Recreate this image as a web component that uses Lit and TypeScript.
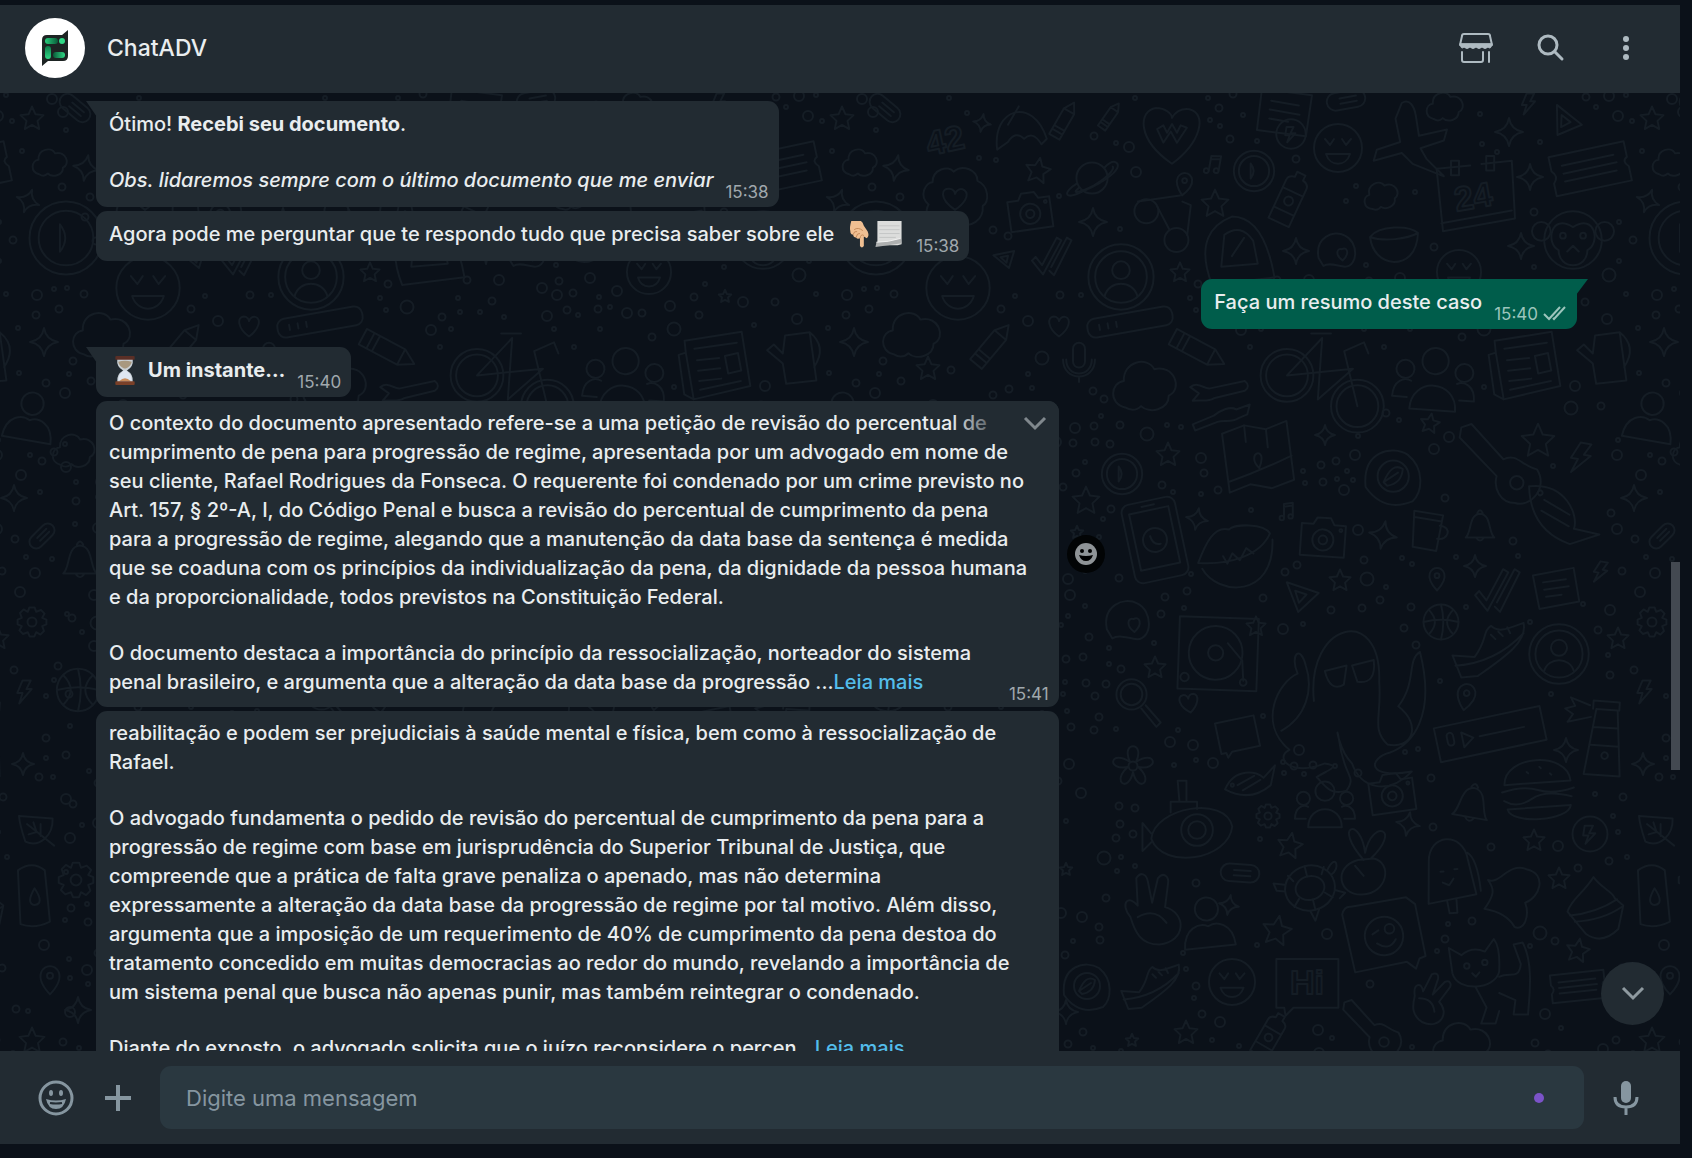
import { LitElement, html, svg, css } from "lit";
import { customElement } from "lit/decorators.js";

/* ---------- wallpaper ---------- */

// Line drawings in a 100 x 100 box centred on the origin.
const shapes: Record<string, unknown> = {
  star: svg`<path d="M0-48 14-16 48-12 23 12 30 46 0 29-30 46-23 12-48-12-14-16Z"/>`,
  sparkle: svg`<path d="M0-50Q7-8 50 0 7 8 0 50-7 8-50 0-7-8 0-50Z"/>`,
  cloud: svg`<path d="M-30 34C-56 28-52-4-32-6-34-36 4-44 14-24 44-32 58 6 36 16 36 38 6 44-6 32-14 40-24 38-30 34Z"/>`,
  heart: svg`<path d="M0 44C-50 8-50-38-22-40-8-40 0-28 0-20 4-30 12-40 26-38 54-30 42 14 0 44Z"/>`,
  bigHeart: svg`<path d="M0 48C-58 8-54-38-26-42-10-42 0-32 0-26 4-34 14-42 28-40 58-32 46 14 0 48Z"/><path d="M-24-8-14 14-2-4 8 14 24-10 14-14 8-2 0-16-8-2-14-14Z"/>`,
  planet: svg`<circle r="30"/><path d="M-28 10C-60 30-52 44-14 24 24 8 62-20 46-30 40-34 28-26 24-20"/><path d="M-24 18C-44 34-20 26 4 14 26 2 44-16 40-22"/>`,
  camera: svg`<path d="M-46-28H-22L-14-42H14L22-28H46V38H-46Z"/><circle r="22" cy="4"/><circle r="9" cy="4"/><circle r="3" cx="36" cy="-18"/>`,
  user: svg`<circle r="48"/><circle r="38"/><circle r="13" cy="-10"/><path d="M-24 28C-18 4 18 4 24 28"/>`,
  bust: svg`<circle r="20" cy="-26"/><path d="M-44 40C-42 2-14-4 0 4 14-4 42 2 44 40Z"/>`,
  group: svg`<circle r="16" cy="-28"/><circle r="11" cx="-36" cy="-16"/><circle r="11" cx="36" cy="-16"/><path d="M-28 32C-28-8 28-8 28 32ZM-32 18H-50C-50-2-36-6-28-2M32 18H50C50-2 36-6 28-2"/>`,
  face: svg`<circle r="48"/><path d="M-26-18-16-6-8-18M8-18 16-6 26-18M-24 12C-16 38 16 38 24 12Z"/>`,
  ticks: svg`<path d="M-48 10-40 2-26 20 6-40 16-34-24 40ZM-6 24 28-40 38-34 0 42-10 32"/>`,
  triangle: svg`<path d="M-40-36 44-8-10 42ZM-18-14 12-4-8 18Z"/>`,
  note: svg`<path d="M-46-34 44-38 46 36-42 40ZM-26-16H24M-26 0H28M-24 16H10"/>`,
  ticket: svg`<path d="M-48-24H48V-4Q40 0 48 8V26H-48V10Q-40 2-48-6ZM-34-10H32M-34 0H34M-34 10H32"/>`,
  bar: svg`<rect x="-50" y="-11" width="100" height="22" rx="9"/><path d="M-36-3V3M-26-3V3M-16-3V3"/>`,
  pencil: svg`<path d="M-46-14H24L48 0 24 14H-46ZM-32-14V14M-22-14V14M24-14V14"/>`,
  mic: svg`<rect x="-15" y="-48" width="30" height="62" rx="15"/><path d="M-32-6C-32 40 32 40 32-6M-40-6C-40 50 40 50 40-6M0 38V50"/>`,
  bolt: svg`<path d="M-6-48H28L10-12H32L-20 48-6 4H-28Z"/>`,
  ring: svg`<circle r="48"/><circle r="36"/><path d="M-8-18Q6 0-8 18Z"/>`,
  coin: svg`<circle r="46"/><path d="M-14-22H8L-2-2H14L-12 26-4 4H-18Z"/>`,
  bottle: svg`<path d="M-20-26Q-20-36-8-38V-48H8V-38Q20-36 20-26V48H-20ZM-20-12H20M-20 26H20"/><circle r="8" cy="6"/>`,
  plane: svg`<path d="M-8-50C2-56 8-46 10-34L14-8 50-16 46-2 16 8 24 22 46 44 6 28-8 14-44 24-40 10-10 0-16-30Z"/>`,
  backpack: svg`<path d="M-34 46C-56-10-34-34-8-44 24-44 40-10 48 36ZM-22 22-18-20Q4-36 20-12L26 18ZM-8 8 8-16"/>`,
  bowl: svg`<path d="M-48-10C-30-34 30-34 48-18 46 26 22 40 0 40-26 38-44 20-48-10ZM-48-10C-20 0 26-6 48-18"/>`,
  egg: svg`<path d="M-46 20C-56-30-10-52 20-36 54-20 54 40 20 42 0 40-20 30-34 40Z"/><path d="M14 26C-6 12 0-6 12-2 24-10 34 8 14 26Z"/>`,
  monkey: svg`<circle r="40"/><circle r="13" cx="-44" cy="-12"/><circle r="13" cx="44" cy="-12"/><path d="M0-18C-32-38-38 6-20 14-20 42 20 42 20 14 38 6 32-38 0-18ZM-8 16 0 8 8 16"/><circle r="4" cx="-14" cy="-6"/><circle r="4" cx="14" cy="-6"/>`,
  bike: svg`<circle r="24" cx="-30" cy="-6"/><circle r="19" cx="-30" cy="-6"/><circle r="24" cx="34" cy="22"/><circle r="19" cx="34" cy="22"/><path d="M-30-6 2-40-2 16 30-12ZM34 22 22-28 40-36 44-26M-8-44H10"/>`,
  news: svg`<path d="M-36-38 42-42 46 32-32 42-44 34-46-20-36-22ZM-36-22-32 42M-24-26 34-28M-22-10H8M-22 4H8M-22 18H8M16-12 34-14 36 10 18 12ZM-22 30 34 24"/>`,
  jug: svg`<path d="M-16-40 28-46 40 40-14 46-20 10-48-14-36-24-20-8ZM28-46Q60-20 36 16"/>`,
  wrench: svg`<path d="M-48-24C-34-34-26-20-16-22L40-34Q50-26 40-18L-10-6C-20 0-30-4-44-2L-34-14ZM-44 36-10 22C0 14 16 6 26 12L48 4 44 20 30 26C18 34 6 28-4 32L-40 46Z"/>`,
  map: svg`<path d="M-44-34-14-42 14-34 42-42 44 36 14 44-14 36-42 44ZM-14-42V-20M14-34V-10M0 16C-18-6 16-14 0 16ZM-42 30Q0 20 44 4"/>`,
  lemon: svg`<path d="M-44 20C-50-40 0-50 26-34 56-10 50 30 34 44-6 60-30 40-44 20Z"/><circle r="26" cx="2" cy="2"/><path d="M-14 12Q0-22 18-10 16 14-8 18ZL10-4"/>`,
  guitar: svg`<path d="M-46-46-34-50 4-8C20-16 26 0 44 4 58 26 36 50 18 44 0 44-8 26-4 12L-48-34Z"/><circle r="8" cx="20" cy="20"/>`,
  phone: svg`<rect x="-34" y="-50" width="68" height="100" rx="10"/><rect x="-25" y="-38" width="50" height="72"/><circle r="15"/><path d="M-8-44H8M-5-6Q-4 6 6 6"/>`,
  lips: svg`<path d="M-48 2C-36-20-22-42-4-34 4-40 40-36 46-22 30 4-10 10-48 2ZM-44 10C-30 46 40 60 48-14M-16-2-12 8-4-4 4 6 14-8 22 0"/>`,
  mug: svg`<path d="M-32-44 34-38 24 44-30 38ZM-30-30 32-24M28-14C58-14 50 20 24 16"/>`,
  bell: svg`<path d="M-42 34C-24 20-34-34 0-36 34-34 24 20 42 34ZM-8-38Q0-54 8-38M-10 36Q0 50 10 36"/>`,
  pin: svg`<path d="M0 48C-60-16-20-48 0-46 20-48 60-16 0 48Z"/><circle r="10" cy="-14"/>`,
  ball: svg`<circle r="46"/><path d="M-46 0Q0-12 46 0M0-46Q12 0 0 46M-32-32Q0 0-32 32M32-32Q0 0 32 32"/>`,
  shoe: svg`<path d="M-48 10-18 12C0-12-8-22 4-30 14-20 26-26 48-34 54-8 20 14-14 38L-36 40ZM-44 24Q10 20 48-20M4-18 10-12M14-22 20-16M26-28 30-20"/>`,
  gear: svg`<path d="M-9-48H9L14-34 30-40 42-28 34-14 48-8V8L34 14 40 30 28 42 14 34 8 48H-8L-14 34-30 40-42 28-34 14-48 8V-8L-34-14-40-30-28-42-14-34Z"/><circle r="15"/>`,
  deck: svg`<path d="M-48-42H46V44H-48Z"/><circle r="32" cx="-4"/><circle r="9" cx="-4"/><path d="M10-12 28 8 30 32"/><circle r="5" cx="-40" cy="30"/><circle r="4" cx="30" cy="34"/>`,
  octopus: svg`<path d="M-28 8C-34-50 22-64 20-6 22 20 14 28 26 40 44 44 52 26 34 12 48-6 40-22 50-28 62 20 44 40 28 46 12 50 10 66 44 60 26 78 6 72 0 54-10 44-12 24-10 34-6 66 4 62-4 74-16 78-20 70-26 64-16 58-8 56-20 54-44 64-58 50-46 44-70 24-54-6-40-12-46-26-38-34-34-18-28 0-34 20-52 30-40 8-36-4"/><path d="M-20-14-4-18-6-4Q-16 2-20-14ZM0-18 16-22Q18-4 4-6Z"/>`,
  magnifier: svg`<circle r="28" cx="-12" cy="-14"/><circle r="20" cx="-12" cy="-14"/><path d="M6 12 34 46 42 38 14 6"/>`,
  voice: svg`<path d="M-50-15H50V17H-50ZM-26-6V8L-16 1ZM-10 1H32"/><rect x="-40" y="-8" width="6" height="12" rx="3"/>`,
  lighthouse: svg`<path d="M-14-32H12L20 48H-24ZM-16-10H14M-18 12H16M-18-32V-42H14V-32M-22-36-46-44-40-34-52-30-42-24-48-14-20-22"/><circle r="4" cy="24"/>`,
  burger: svg`<path d="M-46-10C-44-52 44-52 46-10ZM-50 0Q-20-8 0 0T50 0M-48 12Q-30 24-10 12T46 12M-44 24C-40 46 40 46 44 24ZM-14-26-12-24M4-32 6-30M18-22 20-20"/>`,
  fish: svg`<path d="M-48 14C-30-28 14-22 26-8L48-32 40 6Q0 40-48 14ZM-24 6 8-12M-14 16 20-4"/><circle r="3" cx="-34" cy="6"/>`,
  flower: svg`<circle r="9"/><path d="M-6-8C-26-50 26-50 6-8 46-34 54 10 10 2 44 30 10 56 0 12-10 56-44 30-10 2-54 10-46-34-6-8Z"/>`,
  badge: svg`<path d="M-40 10C-56-4-44-24-34-24-34-44-10-50-2-40 12-52 34-42 34-26 52-18 52 6 42 12 44 34 22 46 10 38-4 50-26 46-28 34-42 32-46 20-40 10Z"/><path d="M0 18C-26 0-20-16-8-14-2-14 0-8 0-6 2-12 8-16 14-12 24-4 12 10 0 18Z"/>`,
  sub: svg`<path d="M-44 10C-40-26 40-40 48-4 44 34-30 46-44 10ZM-22-20V-32H8V-24M-12-32-14-56H-4V-32M-44 4-54-8V24L-44 14"/><circle r="18" cx="8"/><circle r="10" cx="8"/>`,
  carrot: svg`<path d="M-14 0C-50 10-40 50-8 48 28 46 34 4 8-2ZM-6 0C-50-50-10-60-4-10 6-58 48-44 4-2M-18 8-6 22"/>`,
  pop: svg`<path d="M-22-20C-20-56 24-56 28-20L36 26-26 34ZM-2 32 0 48H10L10 30M28-28Q40-20 42 22"/><path d="M-6 8 2 12 8 4M-8-6H-4M10-8H14"/>`,
  leaf: svg`<path d="M-40-30 44-24C46 20 10 50-24 34-30 16-38-6-40-30ZM48 44-20-10M-4-14 4 10-16 16M14-10 14 20"/>`,
  puzzle: svg`<path d="M-40-30C-20-22-6-60 24-48 60-40 46 0 22 8 30 30 20 56 4 48-6 30-24 22-46 18-30-4-28-14-40-30Z"/>`,
  cupcake: svg`<path d="M-46 6C-40-14-20-24-4-50 6-34 28-26 30-16L44-4 36 34Q10 60-16 42ZM-42 12Q0 8 34-14M-34 22Q10 20 42-2"/>`,
  can: svg`<path d="M-22-40Q0-56 20-40L28 40Q4 52-18 44Z"/><path d="M4-12Q20 12 4 14-10 12 4-12Z"/>`,
  hand: svg`<path d="M-34 10C-50-10-36-22-24-6L-26-44C-20-54-12-50-10-40L-4-10 4-44C12-54 20-46 18-36L14-4C44 4 44 44 6 48-20 48-28 30-34 10ZM-24 10Q0-4 16 18"/>`,
  turtle: svg`<ellipse rx="38" ry="34"/><ellipse rx="22" ry="18"/><path d="M-22-16-28-26M22-16 28-26M0-18V-34M0 18V34M20 12 30 22M-20 12-30 22M32-20C52-44 52-16 36-12M-36-14-52-20-50-8-38-4M-8 34-4 50 6 34M36 12 50 20 40 26"/>`,
  photo: svg`<path d="M-48-34Q-44-44-36-42L34-44 44-34 48 32 40 34 34 46 24 36-42 40Z"/><circle r="24"/><circle r="6" cx="8" cy="-8"/><path d="M-14-4-6-8M-10 8Q4 20 14 6"/>`,
  cat: svg`<path d="M-48-40-34-32Q-22-42-8-36L2-50C10-40 8-20 8-14 4 6-38 10-44-12ZM-18 4-6 26-12 44H4L8 30M8-8C20-14 30-4 32-22L24-44 34-46C46-24 42 10 40 34H24L26 18 8 10"/><circle r="3" cx="-28" cy="-20"/><circle r="3" cx="-8" cy="-24"/><path d="M-22-12-18-8-14-13"/>`,
  speech: svg`<path d="M-48-38H46V36H-22L-34 48-36 36H-48Z"/>`,
  calendar: svg`<path d="M-48-34-6-38M8-40 46-44 50 28-40 44-48-34M-30-44H-20V-26H-30ZM14-50H24V-32H14ZM-42 34 46 18"/>`,
  umbrella: svg`<path d="M-46 40C-56-36 20-60 46 20L36 30Q20 4 4 20-12 4-26 26ZM-26-6-6-40"/>`,
  music: svg`<path d="M-10 28V-40L34-46V20M-10-26 34-32"/><circle r="11" cx="-21" cy="30"/><circle r="11" cx="23" cy="22"/>`,
  glasses: svg`<circle r="20" cx="-26" cy="-18"/><circle r="20" cx="24" cy="30"/><path d="M-40-34 30-44M-8-26 12 12M42 22 48-28 34-34"/>`,
  pill: svg`<rect x="-44" y="-20" width="88" height="40" rx="20"/><path d="M-14-6H24M-14 6H24"/>`,
};

type Doodle = [string, number, number, number, number];
const doodles: Doodle[] = [
  ["sparkle", 896, 168, 26, 10], ["pill", 885, 108, 40, 40], ["sparkle", 982, 123, 18, 10], ["umbrella", 1022, 128, 54, 0],
  ["pencil", 1064, 120, 42, -60], ["pencil", 1110, 116, 32, -55], ["bigHeart", 1172, 134, 62, 0], ["planet", 1092, 178, 52, 0],
  ["star", 1038, 170, 26, 10], ["badge", 955, 198, 66, 0], ["camera", 1030, 212, 46, -8], ["sparkle", 1093, 222, 28, 0],
  ["glasses", 1162, 222, 60, 0], ["pin", 1184, 184, 24, 10], ["star", 1215, 203, 28, 0], ["ticks", 1054, 256, 46, 0],
  ["triangle", 1006, 258, 24, -30], ["user", 1121, 277, 68, 0], ["face", 958, 288, 66, 0], ["star", 1180, 272, 20, 0],
  ["cloud", 912, 334, 60, 0], ["pencil", 992, 345, 54, -50], ["heart", 1059, 326, 24, 0], ["mic", 1079, 362, 40, 0],
  ["bar", 1130, 322, 86, -10], ["pencil", 1198, 350, 62, 28], ["cloud", 1145, 385, 66, 0], ["star", 928, 368, 24, 0],
  ["note", 1284, 112, 56, 10], ["coin", 1291, 134, 32, 0], ["pill", 1346, 100, 44, -10], ["face", 1338, 148, 50, 0],
  ["plane", 1408, 142, 78, 0], ["cloud", 1445, 106, 38, 0], ["bolt", 1528, 104, 22, 0], ["triangle", 1566, 122, 36, 20],
  ["star", 1652, 118, 24, 0], ["sparkle", 1509, 132, 28, 0], ["ticket", 1590, 168, 80, -12], ["calendar", 1475, 196, 80, 0],
  ["sparkle", 1530, 177, 26, 0], ["ring", 1254, 171, 42, 0], ["bottle", 1290, 198, 56, 25], ["cloud", 1381, 195, 36, -10],
  ["backpack", 1238, 250, 76, 0], ["sparkle", 1296, 251, 26, 0], ["egg", 1337, 250, 40, 0], ["bowl", 1394, 242, 50, 0],
  ["sparkle", 1521, 246, 26, 0], ["face", 1459, 272, 46, 0], ["monkey", 1573, 240, 72, 0], ["sparkle", 1648, 201, 24, 20],
  ["cloud", 1670, 162, 36, 0], ["ring", 1686, 238, 76, 0], ["music", 1212, 165, 22, 10], ["bike", 1320, 382, 110, 0],
  ["group", 1434, 384, 82, 4], ["news", 1524, 366, 74, -6], ["jug", 1604, 358, 56, 0], ["sparkle", 1664, 342, 28, 0],
  ["bust", 1650, 418, 56, 10], ["wrench", 1220, 402, 62, 0], ["map", 1258, 456, 76, -6], ["star", 1430, 423, 20, 10],
  ["star", 1538, 440, 34, 0], ["sparkle", 1325, 435, 20, 0], ["lemon", 1392, 475, 60, 0], ["guitar", 1500, 466, 84, 0],
  ["bolt", 1580, 458, 32, 10], ["ring", 1122, 474, 42, 0], ["star", 1086, 500, 28, 0], ["star", 1168, 454, 24, 0],
  ["phone", 1155, 540, 80, -12], ["lips", 1236, 556, 80, -8], ["camera", 1323, 538, 48, 4], ["sparkle", 1383, 535, 28, 10],
  ["mug", 1427, 531, 44, 4], ["bell", 1480, 526, 34, 0], ["fish", 1558, 514, 80, 60], ["sparkle", 1634, 498, 26, 0],
  ["pill", 1662, 536, 34, -45], ["sparkle", 1197, 519, 22, 10], ["music", 1286, 512, 20, 0], ["pin", 1437, 579, 24, 0],
  ["sparkle", 1475, 566, 22, 0], ["star", 1340, 580, 22, 0], ["ticks", 1500, 590, 52, 0], ["triangle", 1302, 596, 38, 0],
  ["note", 1556, 588, 46, -8], ["bolt", 1600, 572, 22, 10], ["ball", 1441, 622, 38, 0], ["shoe", 1488, 648, 74, 0],
  ["user", 1559, 654, 62, 0], ["gear", 1652, 622, 30, 0], ["star", 1618, 638, 22, 0], ["deck", 1219, 653, 84, 2],
  ["star", 1256, 626, 20, 0], ["octopus", 1352, 690, 136, 0], ["star", 1155, 667, 22, 0], ["magnifier", 1138, 702, 54, 0],
  ["egg", 1128, 620, 46, 0], ["heart", 1189, 703, 22, -10], ["speech", 1238, 735, 42, -12], ["pin", 1466, 697, 28, 10],
  ["voice", 1490, 733, 108, -12], ["lighthouse", 1606, 736, 82, 4], ["sparkle", 1566, 750, 24, 0], ["burger", 1538, 790, 72, -4],
  ["bolt", 1644, 692, 24, 0], ["sparkle", 1643, 764, 22, 0], ["fish", 1250, 782, 52, 0], ["camera", 1392, 794, 48, -8],
  ["group", 1325, 808, 60, 0], ["bell", 1472, 803, 42, 10], ["flower", 1133, 766, 50, 0], ["sub", 1190, 830, 88, 0],
  ["gear", 1268, 816, 24, 0], ["star", 1290, 845, 26, 10], ["carrot", 1368, 860, 72, 0], ["sparkle", 1408, 824, 24, 10],
  ["pop", 1447, 876, 78, -4], ["star", 1534, 840, 22, 0], ["coin", 1590, 834, 38, 0], ["leaf", 1655, 828, 40, 0],
  ["puzzle", 1512, 898, 60, 0], ["cupcake", 1596, 908, 62, 0], ["star", 1559, 878, 22, 0], ["can", 1652, 896, 64, 0],
  ["hand", 1155, 910, 72, 0], ["pill", 1240, 873, 44, 4], ["turtle", 1310, 888, 66, -14], ["bust", 1208, 924, 58, -6],
  ["sparkle", 1229, 905, 20, 10], ["star", 1277, 930, 30, 10], ["photo", 1384, 936, 80, -8], ["cat", 1492, 984, 90, 0],
  ["star", 1578, 950, 24, 10], ["ticket", 1578, 986, 56, -6], ["speech", 1308, 984, 66, 0], ["face", 1232, 982, 48, 0],
  ["shoe", 1150, 985, 60, 0], ["hand", 1432, 1000, 50, 30], ["star", 1652, 1040, 26, 0], ["guitar", 1372, 1030, 60, 0],
  ["cloud", 1462, 1044, 60, 0], ["pin", 1670, 980, 30, 0], ["lemon", 1086, 985, 50, 0], ["sparkle", 1066, 1012, 24, 0],
  ["cloud", 884, 450, 44, 0], ["bell", 890, 560, 40, 0], ["ball", 888, 690, 46, 0], ["gear", 886, 880, 36, 0],
  ["sparkle", 888, 1010, 26, 0], ["star", 1186, 1032, 24, 0], ["bottle", 1270, 1035, 48, 30],
];

const PERIOD = 810;

// Fills the room between the drawings with small rings, dots and stars.
function scatter(): Doodle[] {
  let seed = 7;
  const rnd = () => (seed = (seed * 16807) % 2147483647) / 2147483647;
  const placed: [number, number, number][] = doodles.map(([, x, y, s]) => [x, y, s / 2]);
  placed.push([945, 140, 26]);
  const out: Doodle[] = [];
  for (let i = 0; i < 2600; i++) {
    const x = 880 + rnd() * PERIOD;
    const y = 94 + rnd() * 960;
    const k = rnd();
    const s = k < 0.35 ? 4 : k < 0.7 ? 7 : k < 0.92 ? 10 : 13;
    if (placed.some(([px, py, pr]) => Math.hypot(px - x, py - y) < pr + s / 2 + 6)) continue;
    placed.push([x, y, s / 2]);
    out.push([k > 0.97 ? "star" : "dot", Math.round(x), Math.round(y), s, 0]);
  }
  return out;
}

function drawDoodle([name, x, y, size, rot]: Doodle) {
  if (name === "dot") return svg`<circle cx=${x} cy=${y} r=${size / 2}></circle>`;
  return svg`<g transform="translate(${x} ${y}) rotate(${rot}) scale(${size / 100})">${shapes[name]}</g>`;
}

@customElement("chat-wallpaper")
class ChatWallpaper extends LitElement {
  static styles = css`
    :host { display: block; position: absolute; inset: 0; overflow: hidden; }
    svg { display: block; }
    .lines { fill: none; stroke: #151d25; stroke-width: 2; stroke-linejoin: round; stroke-linecap: round; }
    .lines * { vector-effect: non-scaling-stroke; }
    .digits { font: 700 34px "Liberation Sans", sans-serif; }
  `;
  render() {
    const all = [...doodles, ...scatter()];
    return html`<svg width="3000" height="1100" viewBox="0 93 3000 1100" aria-hidden="true">
      ${[PERIOD, 0, -PERIOD, -2 * PERIOD].map((dx) => svg`<g class="lines" transform="translate(${dx} 0)">${all.map(drawDoodle)}</g>`)}
      <g class="lines">
        <text class="digits" x="926" y="152" transform="rotate(-12 945 140)">42</text>
        <text class="digits" x="1454" y="208" transform="rotate(-10 1475 195)">24</text>
        <text class="digits" x="1290" y="994">Hi</text>
      </g>
    </svg>`;
  }
}

/* ---------- icons ---------- */

const logo = svg`<svg width="60" height="60" viewBox="0 0 60 60" aria-hidden="true">
  <defs>
    <linearGradient id="g1"><stop offset="0" stop-color="#27cf7c"/><stop offset="1" stop-color="#0a5a38"/></linearGradient>
    <linearGradient id="g2"><stop offset="0" stop-color="#0a5a38"/><stop offset="1" stop-color="#2fd985"/></linearGradient>
    <linearGradient id="g3" x1="0" x2="0" y1="0" y2="1"><stop offset="0" stop-color="#0c7a49"/><stop offset="1" stop-color="#2fd985"/></linearGradient>
  </defs>
  <circle cx="30" cy="30" r="30" fill="#fff"/>
  <path d="M22 17H37L43 12V38Q43 43 38 43H23L17 48V22Q17 17 22 17Z" fill="#1d2423"/>
  <rect x="20" y="20" width="13" height="6" rx="3" fill="url(#g1)"/>
  <circle cx="37" cy="23" r="3" fill="#2fd985"/>
  <rect x="20" y="28" width="6" height="13" rx="3" fill="url(#g3)"/>
  <rect x="28" y="34" width="12" height="6" rx="3" fill="url(#g2)"/>
</svg>`;
const store = svg`<svg width="36" height="32" viewBox="0 0 36 32" fill="none" stroke="currentColor" stroke-width="2" stroke-linecap="round" stroke-linejoin="round" aria-hidden="true">
  <path d="M6 2H30Q32 2 32 4L34 13H2L4 4Q4 2 6 2Z"/>
  <path d="M2 12Q3 18 6 15Q9 18 12 15Q15 18 18 15Q21 18 24 15Q27 18 30 15Q33 18 34 12Z" fill="currentColor" stroke-width="1"/>
  <path d="M4 20V28Q4 30 6 30H23Q25 30 25 28V20M31 20V30"/>
</svg>`;
const search = svg`<svg width="28" height="28" viewBox="0 0 28 28" fill="none" stroke="currentColor" aria-hidden="true">
  <circle cx="11" cy="11" r="9" stroke-width="3"/><path d="M18 18 25 25" stroke-width="3" stroke-linecap="round"/>
</svg>`;
const dots = svg`<svg width="8" height="26" viewBox="0 0 8 26" fill="currentColor" aria-hidden="true">
  <circle cx="4" cy="4" r="3"/><circle cx="4" cy="13" r="3"/><circle cx="4" cy="22" r="3"/>
</svg>`;
const chevron = svg`<svg width="24" height="16" viewBox="0 0 24 16" fill="none" stroke="currentColor" stroke-width="3" aria-hidden="true"><path d="M2 2 12 12 22 2"/></svg>`;
const checks = svg`<svg width="24" height="16" viewBox="0 0 24 16" fill="none" stroke="currentColor" stroke-width="2" aria-hidden="true"><path d="M1 8 6 13 17 1M10 12 11 13 22 1"/></svg>`;
const smileSolid = svg`<svg width="24" height="24" viewBox="0 0 24 24" aria-hidden="true">
  <circle cx="12" cy="12" r="11" fill="#8f9497"/><circle cx="8" cy="9" r="2" fill="#000"/><circle cx="16" cy="9" r="2" fill="#000"/>
  <path d="M5 13Q12 15 19 13Q17 19 12 19T5 13Z" fill="#000"/>
</svg>`;
const smile = svg`<svg width="36" height="36" viewBox="0 0 36 36" aria-hidden="true">
  <circle cx="18" cy="18" r="16" fill="none" stroke="currentColor" stroke-width="3"/>
  <ellipse cx="13" cy="13" rx="2" ry="3" fill="currentColor"/><ellipse cx="23" cy="13" rx="2" ry="3" fill="currentColor"/>
  <path d="M8 19Q18 22 28 19Q26 29 18 29T8 19Z" fill="currentColor"/><path d="M12 23Q18 24 24 23" fill="none" stroke="#222b32" stroke-width="2"/>
</svg>`;
const plus = svg`<svg width="26" height="26" viewBox="0 0 26 26" fill="none" stroke="currentColor" stroke-width="4" aria-hidden="true"><path d="M13 0V26M0 13H26"/></svg>`;
const mic = svg`<svg width="26" height="34" viewBox="0 0 26 34" aria-hidden="true">
  <rect x="8" y="0" width="10" height="22" rx="5" fill="currentColor"/>
  <path d="M2 16Q2 26 13 26T24 16M13 26V34" fill="none" stroke="currentColor" stroke-width="3"/>
</svg>`;
const handDown = svg`<svg width="22" height="29" viewBox="0 0 22 30" role="img" aria-label="👇🏼">
  <path d="M3 1H13Q15 2 16 6L20 12Q22 17 19 19L16 17V27Q14 30 12 27V19Q9 20 8 18Q5 18 5 15Q2 15 2 11Q1 8 3 1Z" fill="#f0bf92"/>
  <path d="M5 15Q6 11 9 12M8 18Q9 13 12 14M12 19Q13 14 16 16M6 10Q10 7 15 11" fill="none" stroke="#c58a5a"/>
</svg>`;
const pageCurl = svg`<svg width="30" height="29" viewBox="0 0 30 30" role="img" aria-label="📃">
  <path d="M3 1H28V25L24 26H3Z" fill="#dcdddc"/>
  <path d="M5 6H26M5 10H26M5 14H26M5 18H22" stroke="#c3c5c5" fill="none"/>
  <path d="M2 23Q14 23 27 19L28 24Q14 26 1 28Z" fill="#aeb0b0"/><path d="M2 23Q14 23 27 19" stroke="#f3f3f3" fill="none"/>
</svg>`;
const hourglass = svg`<svg width="22" height="29" viewBox="0 0 22 30" role="img" aria-label="⏳">
  <path d="M3 3H19Q20 11 13 15Q20 19 19 27H3Q2 19 9 15Q2 11 3 3Z" fill="#c9d0d6"/>
  <path d="M4 6Q11 4 18 6Q17 11 12 13H10Q5 11 4 6Z" fill="#a89880"/>
  <path d="M10 15H12Q18 19 18 25H4Q4 19 10 15Z" fill="#dfe7f2"/><path d="M5 26Q11 20 17 26Z" fill="#c98d5c"/>
  <rect x="1" y="0" width="20" height="4" rx="1" fill="#5b2f26"/><rect x="1" y="26" width="20" height="4" rx="1" fill="#7a4028"/>
</svg>`;

/* ---------- page ---------- */

const contexto = [
  `O contexto do documento apresentado refere-se a uma petição de revisão do percentual de
cumprimento de pena para progressão de regime, apresentada por um advogado em nome de
seu cliente, Rafael Rodrigues da Fonseca. O requerente foi condenado por um crime previsto no
Art. 157, § 2º-A, I, do Código Penal e busca a revisão do percentual de cumprimento da pena
para a progressão de regime, alegando que a manutenção da data base da sentença é medida
que se coaduna com os princípios da individualização da pena, da dignidade da pessoa humana
e da proporcionalidade, todos previstos na Constituição Federal.`,
  `O documento destaca a importância do princípio da ressocialização, norteador do sistema
penal brasileiro, e argumenta que a alteração da data base da progressão ...`,
];
const reabilitacao = [
  `reabilitação e podem ser prejudiciais à saúde mental e física, bem como à ressocialização de
Rafael.`,
  `O advogado fundamenta o pedido de revisão do percentual de cumprimento da pena para a
progressão de regime com base em jurisprudência do Superior Tribunal de Justiça, que
compreende que a prática de falta grave penaliza o apenado, mas não determina
expressamente a alteração da data base da progressão de regime por tal motivo. Além disso,
argumenta que a imposição de um requerimento de 40% de cumprimento da pena destoa do
tratamento concedido em muitas democracias ao redor do mundo, revelando a importância de
um sistema penal que busca não apenas punir, mas também reintegrar o condenado.`,
  `Diante do exposto, o advogado solicita que o juízo reconsidere o percen...`,
];

@customElement("app-root")
class AppRoot extends LitElement {
  static styles = css`
    :host {
      display: flex; flex-direction: column; box-sizing: border-box; height: 100vh;
      padding: 5px 12px 14px 0; background: #0b1119; color: #e9edef;
      font-family: Inter, "Liberation Sans", sans-serif; font-size: 20px; font-weight: 500; line-height: 29px;
    }
    * { box-sizing: border-box; }
    button { border: 0; padding: 0; background: none; color: inherit; font: inherit; display: grid; place-items: center; cursor: pointer; }
    svg { display: block; }
    p { margin: 0; white-space: pre; }
    p + p { margin-top: 27px; }
    a { color: #53bdeb; text-decoration: none; }

    .header { display: flex; align-items: center; height: 88px; flex: none; padding: 0 34px 2px 25px; background: #222b32; }
    .title { flex: 1; margin: 0 0 0 22px; font-size: 23px; font-weight: 500; }
    .actions { display: flex; gap: 35px; color: #aebac1; }
    .actions button { width: 40px; height: 40px; }

    .chat { position: relative; flex: 1; min-height: 0; overflow: hidden; background: #0b1119; }
    .messages { position: relative; display: flex; flex-direction: column; gap: 18px; padding: 8px 103px 0 96px; }
    .thread { display: flex; flex-direction: column; align-items: flex-start; gap: 4px; }
    .sent { align-items: flex-end; }
    .row { display: flex; align-items: center; gap: 8px; width: 100%; }
    .bubble { position: relative; display: flex; gap: 12px; min-height: 50px; padding: 9px 10px 12px 13px; border-radius: 11px; background: #222b32; }
    .sent .bubble { background: #005d4b; }
    .first { border-top-left-radius: 0; }
    .first::before { content: ""; position: absolute; top: 0; left: -10px; width: 11px; height: 16px; background: inherit; clip-path: polygon(0 0, 100% 0, 100% 100%); }
    .sent .first { border-radius: 11px 0 11px 11px; }
    .sent .first::before { left: auto; right: -11px; width: 12px; clip-path: polygon(0 0, 100% 0, 0 100%); }
    .long { display: grid; width: 65%; padding-top: 8px; padding-bottom: 10px; }
    .long > .text, .long > .time { grid-area: 1 / 1; }
    .long > .time { justify-self: end; }
    .text { min-width: 0; }
    .symbols { display: inline-flex; vertical-align: top; gap: 4px; margin: 0 0 0 14px; }
    .lead { margin: 0 12px 0 5px; }
    .time { display: flex; align-items: center; gap: 5px; align-self: end; height: 20px; margin-bottom: -7px; color: #a0a8ad; font-size: 17px; font-weight: 400; line-height: 20px; }
    .sent .time { color: #9cc5bc; }
    .expand { position: absolute; top: 0; right: 0; width: 108px; height: 38px; padding: 8px 0 0 60px; border-radius: 0 11px 0 0; background: linear-gradient(90deg, transparent, #222b32 50%); color: #80888d; }
    .react { width: 38px; height: 38px; border-radius: 50%; background: #020405; flex: none; }
    .down { position: absolute; right: 16px; bottom: 26px; width: 63px; height: 63px; border-radius: 50%; background: #222b32; color: #8f9aa0; }
    .thumb { position: absolute; right: 0; top: 49%; width: 9px; height: 208px; background: #434951; }

    .footer { display: flex; align-items: center; height: 93px; flex: none; padding: 0 34px 0 36px; background: #222b32; color: #8696a0; }
    .footer button { width: 40px; height: 40px; }
    .footer .add { margin: 0 22px; }
    .field { position: relative; flex: 1; margin-right: 22px; display: flex; align-items: center; }
    .entry { width: 100%; height: 63px; padding: 0 60px 0 26px; border: 0; border-radius: 11px; outline: 0; background: #2a3840; color: #e9edef; font: inherit; font-size: 22px; font-weight: 400; }
    .entry::placeholder { color: #8696a0; opacity: 1; }
    .marker { position: absolute; right: 40px; width: 10px; height: 10px; border-radius: 50%; background: #7b53c8; }
  `;

  render() {
    return html`
      <header class="header">
        ${logo}
        <h1 class="title">ChatADV</h1>
        <div class="actions">
          <button aria-label="Loja">${store}</button>
          <button aria-label="Pesquisar">${search}</button>
          <button aria-label="Mais opções">${dots}</button>
        </div>
      </header>
      <main class="chat">
        <chat-wallpaper></chat-wallpaper>
        <div class="messages">
          <section class="thread">
            <div class="bubble first">
              <div class="text">
                <p>Ótimo! <b>Recebi seu documento</b>.</p>
                <p><i>Obs. lidaremos sempre com o último documento que me enviar</i></p>
              </div>
              <time class="time">15:38</time>
            </div>
            <div class="bubble">
              <p class="text">Agora pode me perguntar que te respondo tudo que precisa saber sobre ele<span class="symbols">${handDown}${pageCurl}</span></p>
              <time class="time">15:38</time>
            </div>
          </section>
          <section class="thread sent">
            <div class="bubble first">
              <p class="text">Faça um resumo deste caso</p>
              <time class="time">15:40 ${checks}</time>
            </div>
          </section>
          <section class="thread">
            <div class="bubble first">
              <p class="text"><span class="symbols lead">${hourglass}</span><b>Um instante…</b></p>
              <time class="time">15:40</time>
            </div>
            <div class="row">
              <div class="bubble long">
                <div class="text"><p>${contexto[0]}</p><p>${contexto[1]}<a href="#mais">Leia mais</a></p></div>
                <time class="time">15:41</time>
                <button class="expand" aria-label="Menu da mensagem">${chevron}</button>
              </div>
              <button class="react" aria-label="Reagir">${smileSolid}</button>
            </div>
            <div class="bubble long">
              <div class="text"><p>${reabilitacao[0]}</p><p>${reabilitacao[1]}</p><p>${reabilitacao[2]}<a href="#mais">Leia mais</a></p></div>
            </div>
          </section>
        </div>
        <button class="down" aria-label="Ir para o fim">${chevron}</button>
        <div class="thumb"></div>
      </main>
      <footer class="footer">
        <button aria-label="Emojis">${smile}</button>
        <button class="add" aria-label="Anexar">${plus}</button>
        <div class="field">
          <input class="entry" type="text" placeholder="Digite uma mensagem" aria-label="Digite uma mensagem">
          <span class="marker"></span>
        </div>
        <button aria-label="Gravar áudio">${mic}</button>
      </footer>
    `;
  }
}
